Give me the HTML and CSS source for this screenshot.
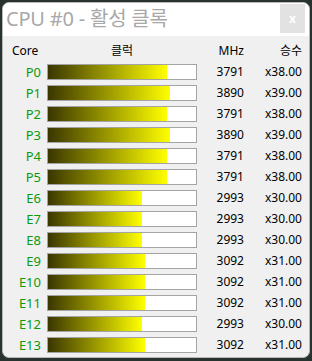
FILE: index.html
```html
<!DOCTYPE html>
<html lang="ko">
<head>
  <meta charset="UTF-8">
  <title>CPU #0 - 활성 클록</title>
  <link rel="stylesheet" href="styles.css">
</head>
<body>
  <div class="window">
    <div class="titlebar">
      <span class="title">CPU #0 - 활성 클록</span>
      <div class="close">x</div>
    </div>
    <div class="grid">
      <div class="head core">Core</div>
      <div class="head center">클럭</div>
      <div class="head num">MHz</div>
      <div class="head num">승수</div>

      <div class="name">P0</div><div class="bar"><div class="fill" style="width: 80.5%"></div></div><div class="num">3791</div><div class="num">x38.00</div>
      <div class="name">P1</div><div class="bar"><div class="fill" style="width: 82.6%"></div></div><div class="num">3890</div><div class="num">x39.00</div>
      <div class="name">P2</div><div class="bar"><div class="fill" style="width: 80.5%"></div></div><div class="num">3791</div><div class="num">x38.00</div>
      <div class="name">P3</div><div class="bar"><div class="fill" style="width: 82.6%"></div></div><div class="num">3890</div><div class="num">x39.00</div>
      <div class="name">P4</div><div class="bar"><div class="fill" style="width: 80.5%"></div></div><div class="num">3791</div><div class="num">x38.00</div>
      <div class="name">P5</div><div class="bar"><div class="fill" style="width: 80.5%"></div></div><div class="num">3791</div><div class="num">x38.00</div>
      <div class="name">E6</div><div class="bar"><div class="fill" style="width: 63.5%"></div></div><div class="num">2993</div><div class="num">x30.00</div>
      <div class="name">E7</div><div class="bar"><div class="fill" style="width: 63.5%"></div></div><div class="num">2993</div><div class="num">x30.00</div>
      <div class="name">E8</div><div class="bar"><div class="fill" style="width: 63.5%"></div></div><div class="num">2993</div><div class="num">x30.00</div>
      <div class="name">E9</div><div class="bar"><div class="fill" style="width: 65.6%"></div></div><div class="num">3092</div><div class="num">x31.00</div>
      <div class="name">E10</div><div class="bar"><div class="fill" style="width: 65.6%"></div></div><div class="num">3092</div><div class="num">x31.00</div>
      <div class="name">E11</div><div class="bar"><div class="fill" style="width: 65.6%"></div></div><div class="num">3092</div><div class="num">x31.00</div>
      <div class="name">E12</div><div class="bar"><div class="fill" style="width: 63.5%"></div></div><div class="num">2993</div><div class="num">x30.00</div>
      <div class="name">E13</div><div class="bar"><div class="fill" style="width: 65.6%"></div></div><div class="num">3092</div><div class="num">x31.00</div>
    </div>
  </div>
</body>
</html>
```

FILE: styles.css
```css
html, body {
  margin: 0;
  height: 100%;
}
body {
  background-color: #28322f;
  font-family: "Noto Sans", "Noto Sans CJK KR", sans-serif;
  font-size: 12px;
  color: #000;
  padding: 2px;
  box-sizing: border-box;
}
.window {
  width: 308px;
  height: 356px;
  box-sizing: border-box;
  background-color: #f0f0f0;
  border: 1px solid #b8b8b8;
  border-radius: 7px;
  overflow: hidden;
}
.titlebar {
  height: 33px;
  background-color: #fff;
  display: flex;
  justify-content: space-between;
  align-items: flex-start;
}
.title {
  font-size: 20px;
  color: #a8a8a8;
  padding: 2px 0 0 3px;
  line-height: 28px;
  letter-spacing: -0.2px;
}
.close {
  width: 25px;
  height: 29px;
  margin: 1px 4px 0 0;
  background-color: #e2e2e2;
  color: #fff;
  font-weight: bold;
  font-size: 12px;
  display: flex;
  align-items: center;
  justify-content: center;
}
.grid {
  display: grid;
  grid-template-columns: 38px 156px 47px 58px;
  grid-auto-rows: 16px;
  row-gap: 5px;
  padding-top: 7px;
  align-items: center;
}
.grid > div {
  line-height: 16px;
}
.head.core {
  padding-left: 9px;
}
.center {
  text-align: center;
  padding-left: 6px;
}
.num {
  text-align: right;
}
.name {
  text-align: right;
  color: #0c9a0c;
  font-size: 13px;
}
.bar {
  height: 16px;
  margin-left: 6px;
  box-sizing: border-box;
  border: 1px solid #a4a4a4;
  background-color: #fff;
}
.fill {
  height: 100%;
  background: linear-gradient(to right, #3a3600, #ffff00);
}
```
